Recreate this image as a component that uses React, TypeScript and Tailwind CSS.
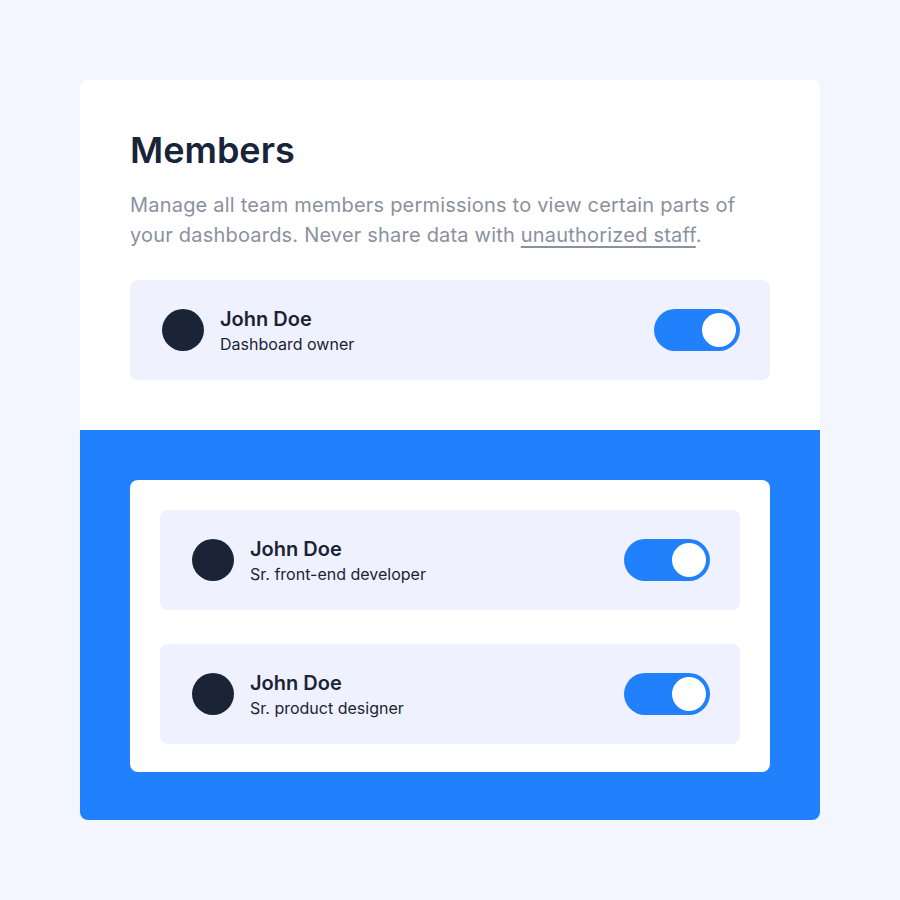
const font = { fontFamily: "Inter, 'Noto Sans', sans-serif" }

function Toggle() {
  return (
    <div className="w-[86px] h-[42px] rounded-full bg-[#2180fc] flex items-center justify-end p-1 shrink-0">
      <div className="w-[34px] h-[34px] rounded-full bg-white" />
    </div>
  )
}

function MemberRow({ role }: { role: string }) {
  return (
    <div className="h-[100px] rounded-lg bg-[#eff2fe] flex items-center justify-between pl-8 pr-[30px]">
      <div className="flex items-center gap-4">
        <div className="w-[42px] h-[42px] rounded-full bg-[#1a2436]" />
        <div className="flex flex-col pt-0.5">
          <span className="text-[20px] leading-[26px] font-semibold text-[#1a2436]">John Doe</span>
          <span className="text-[16px] leading-[24px] text-[#1a2436]">{role}</span>
        </div>
      </div>
      <Toggle />
    </div>
  )
}

export default function App() {
  return (
    <div className="w-full min-h-[900px] bg-[#f3f6fe] flex justify-center pt-20" style={font}>
      <div className="w-[740px] h-[740px] rounded-lg overflow-hidden flex flex-col">
        <div className="bg-white px-[50px] pt-[50px] pb-[50px]">
          <h1 className="text-[36px] leading-[40px] font-semibold text-[#18243a]">Members</h1>
          <p className="mt-5 text-[20px] leading-[30px] tracking-[0.01em] text-[#8a919e]">
            Manage all team members permissions to view certain parts of your dashboards. Never share data with{" "}
            <span className="underline underline-offset-4">unauthorized staff</span>.
          </p>
          <div className="mt-[30px]">
            <MemberRow role="Dashboard owner" />
          </div>
        </div>
        <div className="flex-1 bg-[#2180fc] px-[50px] pt-[50px]">
          <div className="bg-white rounded-lg p-[30px] pb-[28px] flex flex-col gap-[34px]">
            <MemberRow role="Sr. front-end developer" />
            <MemberRow role="Sr. product designer" />
          </div>
        </div>
      </div>
    </div>
  )
}
